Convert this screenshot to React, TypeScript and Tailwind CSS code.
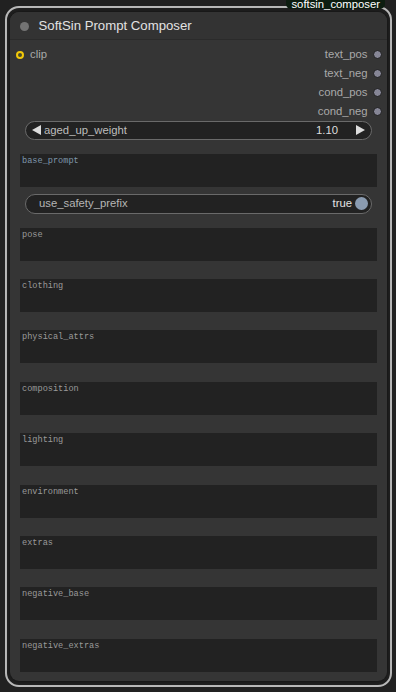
const OUTPUTS = ['text_pos', 'text_neg', 'cond_pos', 'cond_neg'];

const PROMPTS = [
  'pose',
  'clothing',
  'physical_attrs',
  'composition',
  'lighting',
  'environment',
  'extras',
  'negative_base',
  'negative_extras',
];

const sans = 'font-["Liberation_Sans",Arial,sans-serif]';

function PromptBox({ label, tint }: { label: string; tint?: boolean }) {
  return (
    <div className="mx-[10px] h-[33px] bg-[#222222] px-[2px] pt-[2px]">
      <div
        className={`font-["Liberation_Mono",monospace] text-[8.6px] leading-[10px] ${
          tint ? 'text-[#7f96ab]' : 'text-[#9a9a9a]'
        }`}
      >
        {label}
      </div>
    </div>
  );
}

export default function App() {
  return (
    <div className={`relative w-[396px] h-[692px] overflow-hidden bg-[#212121] ${sans}`}>
      {/* selection outline */}
      <div className="ml-[5px] mt-[6px] w-[387px] h-[681px] rounded-[14px] border-2 border-[#b9b9b9] pt-[4px] pb-[4px] pl-[3px]">
        <div className="relative w-[377px] h-[669px] rounded-[9px] bg-[#353535] shadow-[0_0_4px_rgba(0,0,0,0.6)]">
          <div className="absolute -top-[18px] right-[2px] h-[15px] rounded-b-[5px] bg-[#0d1d10] px-[5px] text-[11.3px] leading-[9px] text-white flex items-end">
            softsin_composer
          </div>

          <div className="h-[28px] rounded-t-[9px] bg-[#333333] border-b border-[#2b2b2b] flex items-center pt-[1px]">
            <div className="ml-[9.5px] w-[9px] h-[9px] rounded-full bg-[#737373]" />
            <div className="ml-[10px] text-[13.2px] text-[#e2e2e2]">SoftSin Prompt Composer</div>
          </div>

          <div className="pt-[5.5px] relative">
            {OUTPUTS.map((o, i) => (
              <div key={o} className="h-[18.8px] flex items-center justify-between">
                <div className="flex items-center">
                  {i === 0 && (
                    <>
                      <div className="ml-[6px] w-[8px] h-[8px] rounded-full border-[2px] border-[#f2c80a] bg-[#4a4a2a]" />
                      <span className="ml-[6px] text-[11.3px] text-[#a9a9a9]">clip</span>
                    </>
                  )}
                </div>
                <div className="flex items-center">
                  <span className="text-[11.3px] text-[#a9a9a9]">{o}</span>
                  <div className="ml-[5px] mr-[5.5px] w-[9px] h-[9px] rounded-full bg-[#868696] border border-[#1c1c1c]" />
                </div>
              </div>
            ))}

            <div className="mt-[0px] mx-[15px] h-[19.5px] rounded-full bg-[#222222] border border-[#6a6a6a] flex items-center text-[11.3px]">
              <svg width="9" height="10" viewBox="0 0 9 10" className="ml-[6px]">
                <polygon points="9,0 9,10 0,5" fill="#dddddd" />
              </svg>
              <span className="ml-[3px] text-[#bdbdbd]">aged_up_weight</span>
              <span className="ml-auto text-[#dedede]">1.10</span>
              <svg width="9" height="10" viewBox="0 0 9 10" className="ml-[18px] mr-[6px]">
                <polygon points="0,0 0,10 9,5" fill="#dddddd" />
              </svg>
            </div>

            <div className="mt-[14px]">
              <PromptBox label="base_prompt" tint />
            </div>

            <div className="mt-[7px] mx-[15px] h-[19.5px] rounded-full bg-[#222222] border border-[#6a6a6a] flex items-center text-[11.3px]">
              <span className="ml-[13px] text-[#b5b5b5]">use_safety_prefix</span>
              <span className="ml-auto text-[#e4e4e4]">true</span>
              <div className="ml-[3px] mr-[3px] w-[13px] h-[13px] rounded-full bg-[#8a9bb0]" />
            </div>

            <div className="mt-[14px] flex flex-col gap-[18.4px]">
              {PROMPTS.map(p => (
                <PromptBox key={p} label={p} />
              ))}
            </div>
          </div>
        </div>
      </div>
    </div>
  );
}
